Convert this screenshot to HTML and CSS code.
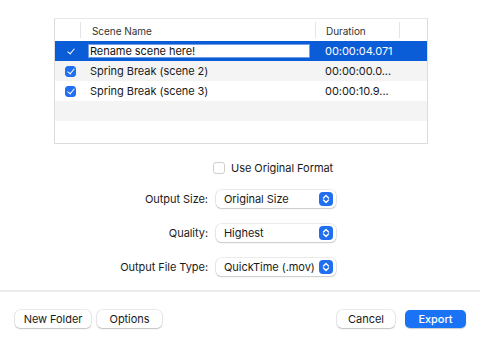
FILE: index.html
```html
<!DOCTYPE html>
<html lang="en">
<head>
    <meta charset="UTF-8">
    <title>Export Scenes</title>
    <link rel="stylesheet" href="styles.css">
</head>
<body>

<div class="sheet">
    <!-- Scene list -->
    <div class="scene-table">
        <div class="row header">
            <div class="cell check"></div>
            <div class="cell name">Scene Name</div>
            <div class="cell duration">Duration</div>
            <div class="cell filler"></div>
        </div>
        <div class="row selected">
            <div class="cell check"><span class="box on"></span></div>
            <div class="cell name"><input class="rename" type="text" value="Rename scene here!"></div>
            <div class="cell duration">00:00:04.071</div>
            <div class="cell filler"></div>
        </div>
        <div class="row stripe">
            <div class="cell check"><span class="box on"></span></div>
            <div class="cell name">Spring Break (scene 2)</div>
            <div class="cell duration">00:00:00.0...</div>
            <div class="cell filler"></div>
        </div>
        <div class="row">
            <div class="cell check"><span class="box on"></span></div>
            <div class="cell name">Spring Break (scene 3)</div>
            <div class="cell duration">00:00:10.9...</div>
            <div class="cell filler"></div>
        </div>
        <div class="row stripe"></div>
    </div>

    <!-- Export options -->
    <div class="options">
        <label class="original"><span class="box"></span>Use Original Format</label>

        <div class="field">
            <span class="label">Output Size:</span>
            <div class="popup"><span>Original Size</span><span class="stepper"></span></div>
        </div>
        <div class="field">
            <span class="label">Quality:</span>
            <div class="popup"><span>Highest</span><span class="stepper"></span></div>
        </div>
        <div class="field">
            <span class="label">Output File Type:</span>
            <div class="popup"><span>QuickTime (.mov)</span><span class="stepper"></span></div>
        </div>
    </div>
</div>

<!-- Bottom buttons -->
<div class="footer">
    <div class="group">
        <button class="btn new-folder">New Folder</button>
        <button class="btn options-btn">Options</button>
    </div>
    <div class="group">
        <button class="btn cancel">Cancel</button>
        <button class="btn primary">Export</button>
    </div>
</div>

</body>
</html>
```

FILE: styles.css
```css
body {
    margin: 0;
    padding: 0;
    width: 480px;
    height: 341px;
    background: #fff;
    font-family: "Inter", "Liberation Sans", sans-serif;
    font-size: 11px;
    letter-spacing: -0.05px;
    color: #1a1a1a;
    overflow: hidden;
}
.sheet {
    height: 292px;
    padding-top: 18px;
    box-sizing: border-box;
    border-bottom: 2px solid #ececec;
}

/* Table */
.scene-table {
    margin-left: 54px;
    width: 374px;
    height: 126px;
    box-sizing: border-box;
    border: 1px solid #dcdcdc;
    border-top-color: #e6e6e6;
}
.row {
    display: grid;
    grid-template-columns: 26px 235px 84px 1fr;
    height: 20px;
    align-items: center;
}
.row.header {
    height: 22px;
    font-size: 10px;
    color: #333;
}
.row.header .cell {
    border-right: 1px solid #e4e4e4;
    height: 14px;
    line-height: 14px;
    padding-top: 2px;
}
.row.header .filler {
    border-right: none;
}
.row.header .name {
    padding-left: 11px;
}
.row.header .duration {
    padding-left: 10px;
}
.row.stripe {
    background: #f4f4f5;
}
.row.selected {
    background: #0b5cd7;
    color: #fff;
}
.cell {
    white-space: nowrap;
    overflow: hidden;
}
.name {
    padding-left: 9px;
}
.duration {
    padding-left: 9px;
}
.check {
    display: flex;
    justify-content: center;
    padding-left: 4px;
}
.rename {
    width: 222px;
    height: 14px;
    margin: 0 0 0 -2px;
    padding: 0 1px;
    box-sizing: border-box;
    border: 1px solid #6f9ce4;
    font-family: inherit;
    font-size: 11px;
    letter-spacing: inherit;
    color: #111;
    background: #fff;
    outline: none;
}

/* Checkbox */
.box {
    display: inline-block;
    width: 11px;
    height: 11px;
    border-radius: 3px;
    box-sizing: border-box;
    border: 1px solid #c9c9c9;
    background: #fff;
    position: relative;
}
.box.on {
    background: #1f6ff0;
    border-color: #1f6ff0;
}
.selected .box.on {
    background: #0b5cd7;
    border-color: #0b5cd7;
}
.box.on::after {
    content: "";
    position: absolute;
    left: 3px;
    top: 0px;
    width: 3px;
    height: 6px;
    border: solid #fff;
    border-width: 0 1.6px 1.6px 0;
    transform: rotate(40deg);
}

/* Options */
.options {
    display: flex;
    flex-direction: column;
    align-items: flex-start;
    margin-top: 16px;
}
.original {
    display: flex;
    align-items: center;
    gap: 6px;
    margin-left: 213px;
    height: 15px;
}
.original .box {
    width: 12px;
    height: 12px;
    border-color: #cfcfcf;
}
.field {
    display: grid;
    grid-template-columns: 208px 120px;
    column-gap: 8px;
    align-items: center;
    height: 19px;
    margin-top: 15px;
}
.original + .field {
    margin-top: 14px;
}
.label {
    text-align: right;
    white-space: nowrap;
}
.popup {
    display: flex;
    align-items: center;
    justify-content: space-between;
    height: 18px;
    padding: 0 3px 0 8px;
    border-radius: 5px;
    background: #fff;
    white-space: nowrap;
    box-shadow: 0 0 0 0.5px rgba(0, 0, 0, 0.15), 0 1px 1.5px rgba(0, 0, 0, 0.15);
}
.stepper {
    width: 14px;
    height: 14px;
    border-radius: 4px;
    background: #1f6ff0 url("data:image/svg+xml;utf8,<svg xmlns='http://www.w3.org/2000/svg' width='14' height='14'><path d='M4.5 6 L7 3.6 L9.5 6 M4.5 8 L7 10.4 L9.5 8' fill='none' stroke='white' stroke-width='1.4' stroke-linecap='round' stroke-linejoin='round'/></svg>") no-repeat center;
}

/* Footer */
.footer {
    display: flex;
    justify-content: space-between;
    padding: 18px 14px 0 15px;
}
.group {
    display: flex;
    gap: 6px;
}
.group + .group {
    gap: 10px;
}
.btn {
    height: 18px;
    padding: 0;
    border: none;
    border-radius: 5px;
    background: #fff;
    white-space: nowrap;
    box-shadow: 0 0 0 0.5px rgba(0, 0, 0, 0.15), 0 1px 1.5px rgba(0, 0, 0, 0.18);
    font-family: inherit;
    font-size: 11px;
    letter-spacing: inherit;
    color: #1a1a1a;
    cursor: pointer;
}
.new-folder {
    width: 76px;
}
.options-btn {
    width: 65px;
}
.cancel {
    width: 58px;
}
.primary {
    width: 61px;
    background: #1a73f5;
    color: #fff;
    font-weight: 500;
    box-shadow: 0 0.5px 1px rgba(0, 0, 0, 0.2);
}
```
